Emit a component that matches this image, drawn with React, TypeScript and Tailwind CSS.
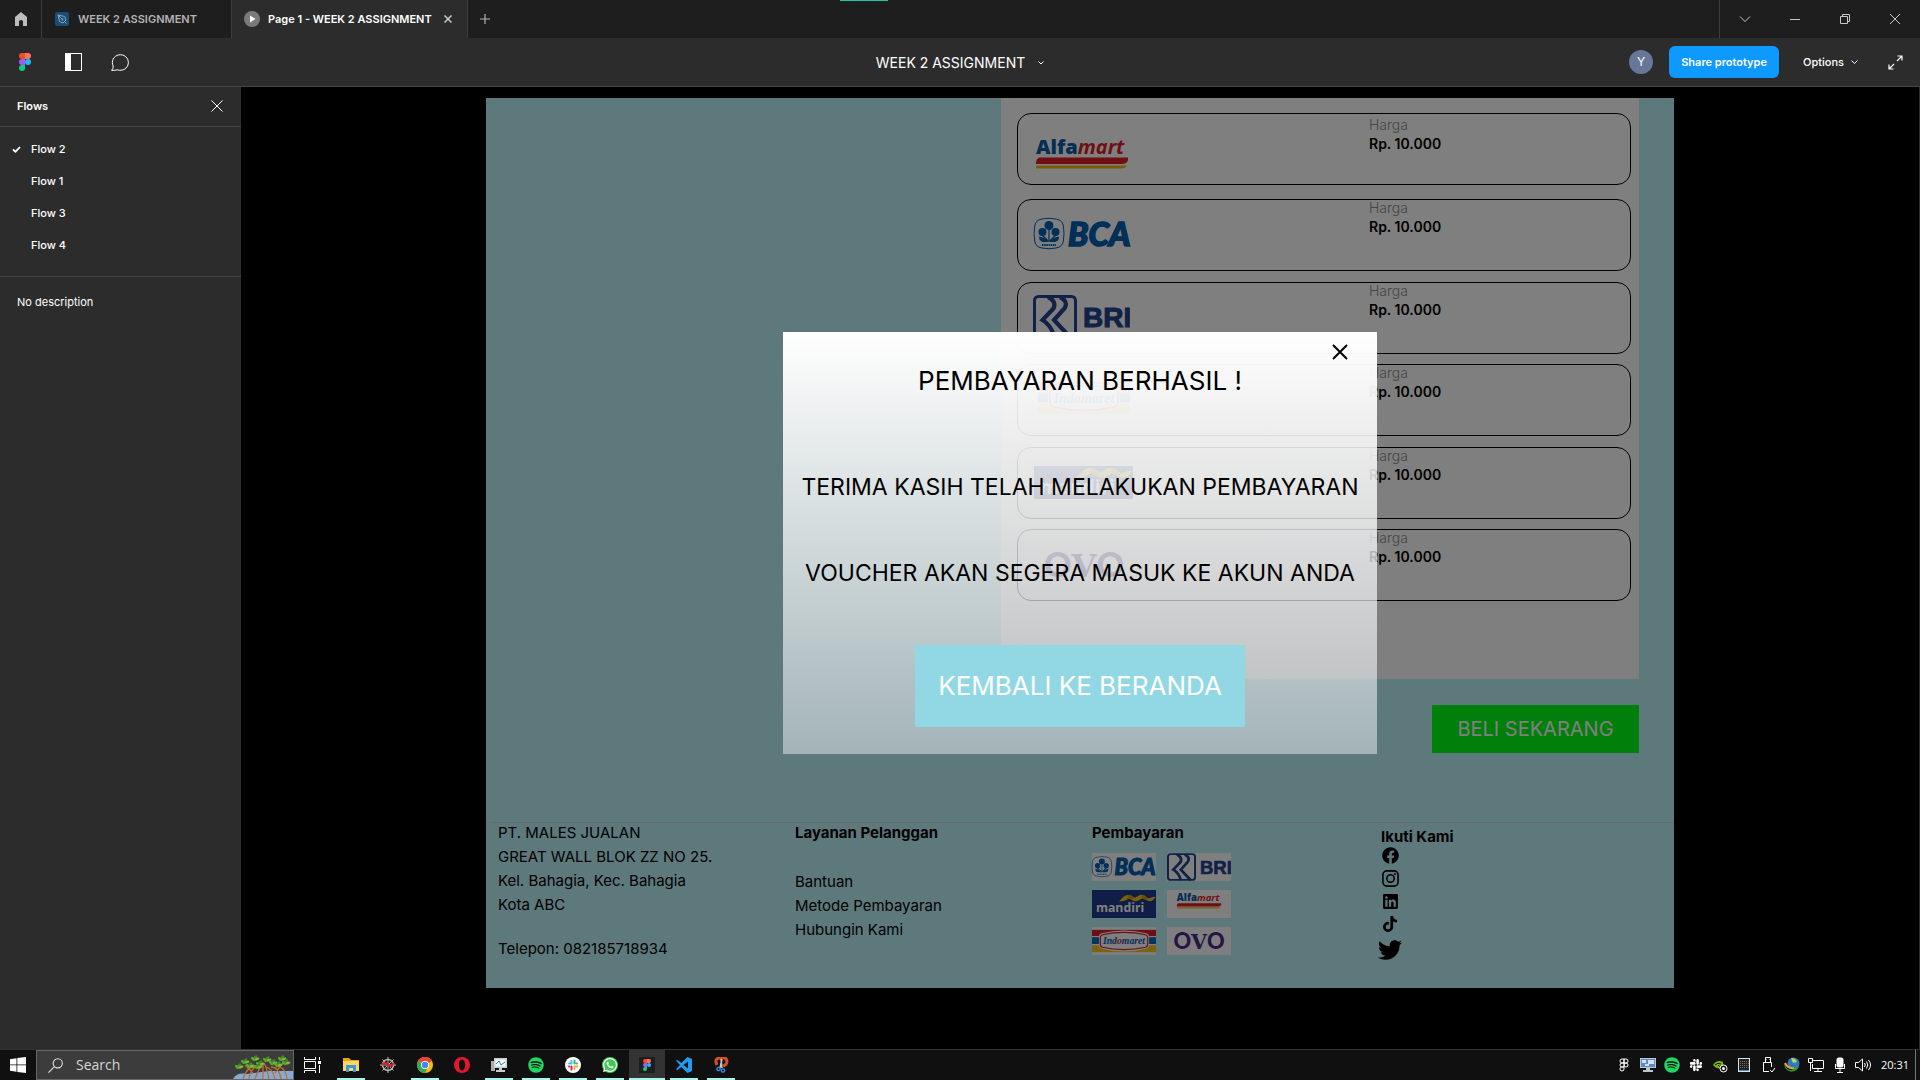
import type { ReactNode } from "react";
import { FaFacebook, FaLinkedin, FaSlack, FaSpotify, FaTiktok, FaTwitter, FaWhatsapp } from "react-icons/fa";

/* ---------- Brand logos ---------- */

type LogoProps = { className?: string; viewBox?: string };

function AlfamartLogo({ className = "", viewBox = "0 0 92 31" }: LogoProps) {
  return (
    <svg className={`overflow-visible ${className}`} viewBox={viewBox} role="img" aria-label="Alfamart">
      <text x="0" y="15.5" fontFamily="Open Sans, sans-serif" fontSize="20" fontWeight="800" fill="#0a5cab">
        Alfa<tspan fontStyle="italic" fontWeight="700" fill="#e01f26">mart</tspan>
      </text>
      <path d="M4 19.500H92V22Q91 26 86 26H0V24Q1 19.500 4 19.500Z" fill="#e01f26" />
      <path d="M0 27.500H91Q89 30.500 86 30.500H0Z" fill="#f2b90f" />
    </svg>
  );
}

function BcaLogo({ className = "", viewBox = "0 0 97 31" }: LogoProps) {
  return (
    <svg className={`overflow-visible ${className}`} viewBox={viewBox} role="img" aria-label="BCA">
      <g fill="#0060af">
        <path d="M8 1Q15-.5 22 1Q29 2 29.500 9Q30.500 15.500 29.500 22Q29 29 22 30Q15 31.500 8 30Q1 29 .6 22Q-.4 15.500 .6 9Q1 2 8 1Z" fill="none" stroke="#0060af" strokeWidth="1" />
        <circle cx="15" cy="7.500" r="4.500" />
        <circle cx="8.500" cy="14" r="4" />
        <circle cx="21.500" cy="14" r="4" />
        <path d="M14.400 10H15.600V24H14.400ZM8 16L14.200 22V24L7 17ZM22 16L15.800 22V24L23 17Z" />
        <path d="M5 18.500C9 19 13 21 14.200 24H9Q5 23 5 18.500ZM25 18.500C21 19 17 21 15.800 24H21Q25 23 25 18.500Z" />
        <path d="M8 27H22" stroke="#0060af" strokeWidth="1.800" strokeDasharray="1.500 .7" />
        <text x="34" y="27.500" fontFamily="Lato, sans-serif" fontSize="33" fontWeight="900" fontStyle="italic" stroke="#0060af" strokeWidth="1.600">BCA</text>
      </g>
    </svg>
  );
}

function BriLogo({ className = "", viewBox = "0 0 97 42" }: LogoProps) {
  return (
    <svg className={className} viewBox={viewBox} role="img" aria-label="BRI">
      <g fill="none" stroke="#25428f" strokeWidth="4.200">
        <rect x="1.500" y="1.500" width="41" height="39" rx="4" strokeWidth="3" />
        <path d="M15 2C23 6 23 12 18 16L9.500 25Q18 30 21 41" />
        <path d="M27 2C35 6 34 12 29 16L21 25L36 41" />
      </g>
      <text x="50" y="32" fontFamily="Liberation Sans, sans-serif" fontSize="28" fontWeight="700" fill="#25428f" stroke="#25428f" strokeWidth="1">BRI</text>
    </svg>
  );
}

function IndomaretLogo({ className = "", viewBox = "0 0 92 32" }: LogoProps) {
  return (
    <svg className={className} viewBox={viewBox} role="img" aria-label="Indomaret">
      <rect y="0" width="92" height="9" fill="#d8202c" />
      <rect y="9" width="92" height="1.500" fill="#fff" />
      <rect y="10.500" width="92" height="10" fill="#0c6cb8" />
      <rect y="20.500" width="92" height="1.500" fill="#fff" />
      <rect y="22" width="92" height="10" fill="#f7c51e" />
      <path d="M14 5Q46-3 78 5Q82 6 82 10V22Q82 26 78 27Q46 35 14 27Q10 26 10 22V10Q10 6 14 5Z" fill="#fff" />
      <path d="M15 7Q46 0 77 7Q80 8 80 11V21Q80 24 77 25Q46 32 15 25Q12 24 12 21V11Q12 8 15 7Z" fill="#fff" stroke="#d8202c" strokeWidth="1.800" />
      <text x="46" y="20.500" textAnchor="middle" fontFamily="Liberation Serif, serif" fontStyle="italic" fontWeight="700" fontSize="14" fill="#0c5ca8">
        Ind<tspan fill="#d8202c">o</tspan>maret
      </text>
    </svg>
  );
}

function MandiriLogo({ className = "", viewBox = "0 0 99 33" }: LogoProps) {
  return (
    <svg className={className} viewBox={viewBox} role="img" aria-label="Mandiri">
      <rect y="-6" width="99" height="44" fill="#213a8f" />
      <path d="M42 12C48 6 50 2 56 2C62 2 63 6 67 6C71 5 73 1 78 2C84 3 84 7 88 7C92 7 93 4 98 5C96 10 91 13 86 11C81 9 80 6 76 8C72 11 69 13 64 11C60 9 58 6 54 9C51 11 47 12 42 12Z" fill="#f5c518" />
      <path d="M56 2C62 2 63 6 67 6L62 10C59 8 57 7 54 9ZM78 2C84 3 84 7 88 7L84 10C81 8 79 7 76 8Z" fill="#d9940f" />
      <text x="6" y="28" fontFamily="Open Sans, sans-serif" fontSize="19" fontWeight="700" fill="#fff">mandiri</text>
    </svg>
  );
}

function OvoLogo({ className = "", viewBox = "0 0 80 27" }: LogoProps) {
  return (
    <svg className={`overflow-visible ${className}`} viewBox={viewBox} role="img" aria-label="OVO">
      <text x="40" y="25.500" textAnchor="middle" fontFamily="Lato, sans-serif" fontSize="34" fontWeight="900" fill="#4c2a86">
        O<tspan fontFamily="DejaVu Serif, serif" fontWeight="700" fontSize="32">V</tspan>O
      </text>
    </svg>
  );
}

function FigmaMark({ className = "" }: { className?: string }) {
  return (
    <svg className={className} viewBox="0 0 12 18" aria-hidden="true">
      <path d="M3 0H6V6H3A3 3 0 0 1 3 0Z" fill="#f24e1e" />
      <path d="M6 0H9A3 3 0 0 1 9 6H6Z" fill="#ff7262" />
      <path d="M3 6H6V12H3A3 3 0 0 1 3 6Z" fill="#a259ff" />
      <circle cx="9" cy="9" r="3" fill="#1abcfe" />
      <path d="M3 12H6V15A3 3 0 1 1 3 12Z" fill="#0acf83" />
    </svg>
  );
}

/* ---------- Window chrome ---------- */

function WindowButton({ label, children }: { label: string; children: ReactNode }) {
  return (
    <button aria-label={label} className="flex h-full w-[50px] items-center justify-center">
      <svg width="12" height="12" viewBox="0 0 12 12" fill="none" stroke="#c8c8c8" strokeWidth="1">
        {children}
      </svg>
    </button>
  );
}

function TabBar() {
  return (
    <header className="relative flex h-[38px] bg-[#1e1e1e] text-[11px] font-semibold">
      <div className="absolute top-0 left-[840px] h-px w-12 bg-[#1fc8a4]" />
      <button aria-label="Home" className="flex w-[42px] items-center justify-center border-r border-[#3d3d3d]">
        <svg width="14" height="14" viewBox="0 0 14 14" fill="#bdbdbd">
          <path d="M7 0L13 5V14H9V9.500Q9 8 7 8Q5 8 5 9.500V14H1V5Z" />
        </svg>
      </button>
      <button className="flex w-[190px] items-center gap-[9px] border-r border-[#3d3d3d] pl-[13px] text-[#b3b3b3]">
        <svg width="14" height="14" viewBox="0 0 14 14" fill="none">
          <rect width="14" height="14" rx="2" fill="#174e78" />
          <path d="M3 3L9.500 4.500L11 8L8 11L4.500 9.500ZM3 3L7 7M10 10L11.500 11.500" stroke="#8fa3b3" />
          <circle cx="7.500" cy="7.500" r="1" fill="#8fa3b3" />
        </svg>
        WEEK 2 ASSIGNMENT
      </button>
      <div className="flex w-[236px] items-center border-r border-[#3d3d3d] bg-[#2c2c2c] pr-[15px] pl-3 text-white">
        <button className="flex items-center gap-2">
          <svg width="16" height="16" viewBox="0 0 16 16">
            <circle cx="8" cy="8" r="8" fill="#7a7a7a" />
            <path d="M6 4.500L11.500 8L6 11.500Z" fill="#fff" />
          </svg>
          Page 1 - WEEK 2 ASSIGNMENT
        </button>
        <button aria-label="Close tab" className="ml-auto">
          <svg width="8" height="8" viewBox="0 0 8 8" stroke="#ccc" strokeWidth="1.500">
            <path d="M.5 .5L7.500 7.500M7.500 .5L.5 7.500" />
          </svg>
        </button>
      </div>
      <button aria-label="New tab" className="pl-3">
        <svg width="10" height="10" viewBox="0 0 10 10" stroke="#b3b3b3">
          <path d="M5 0V10M0 5H10" strokeWidth="1.200" />
        </svg>
      </button>
      <div className="ml-auto flex border-l border-[#3d3d3d]">
        <WindowButton label="Tabs">
          <path d="M1 3.500L6 8.500L11 3.500" />
        </WindowButton>
        <WindowButton label="Minimize">
          <path d="M1 6.500H11" />
        </WindowButton>
        <WindowButton label="Restore">
          <path d="M1.500 3.500H8.500V10.500H1.500ZM3.500 3.500V1.500H10.500V8.500H8.500" />
        </WindowButton>
        <WindowButton label="Close">
          <path d="M1 1L11 11M11 1L1 11" />
        </WindowButton>
      </div>
    </header>
  );
}

function Toolbar() {
  return (
    <div className="grid h-[49px] grid-cols-[1fr_auto_1fr] items-center border-b border-[#444] bg-[#2c2c2c] text-white">
      <div className="flex items-center pl-[19px]">
        <button aria-label="Figma menu">
          <FigmaMark className="h-[18px] w-3" />
        </button>
        <button aria-label="Toggle sidebar" className="ml-[34px]">
          <svg width="17" height="18" viewBox="0 0 17 18">
            <rect x=".5" y=".5" width="16" height="17" fill="none" stroke="#fff" />
            <rect width="6" height="18" fill="#fff" />
          </svg>
        </button>
        <button aria-label="Comments" className="ml-[29px]">
          <svg width="18" height="17" viewBox="0 0 18 17" fill="none" stroke="#fff">
            <path d="M.6 16.400Q2.400 14.500 2.200 12A8 7.800 0 1 1 6.500 15.800Q4 16.500 .6 16.400Z" />
          </svg>
        </button>
      </div>
      <button className="flex items-center gap-[13px] pt-0.5 text-sm leading-5">
        WEEK 2 ASSIGNMENT
        <svg width="6" height="4" viewBox="0 0 6 4" fill="none" stroke="#fff">
          <path d="M.5 .5L3 3L5.500 .5" />
        </svg>
      </button>
      <div className="flex items-center justify-end pr-[17px] text-[11px]">
        <span className="flex size-6 items-center justify-center rounded-full bg-[#667799] text-xs">Y</span>
        <button className="ml-4 h-8 w-[110px] rounded-md bg-[#0d99ff] font-semibold">Share prototype</button>
        <button className="ml-6 flex items-center gap-[7px] font-medium">
          Options
          <svg width="7" height="4" viewBox="0 0 7 4" fill="none" stroke="#fff">
            <path d="M.5 .5L3.500 3.500L6.500 .5" />
          </svg>
        </button>
        <button aria-label="Full screen" className="ml-[30px]">
          <svg width="15" height="15" viewBox="0 0 15 15" fill="none" stroke="#fff" strokeWidth="1.200">
            <path d="M9.500 1H14V5.500M14 1L9 6M1 9.500V14H5.500M1 14L6 9" />
          </svg>
        </button>
      </div>
    </div>
  );
}

const flows = [
  { name: "Flow 2", active: true },
  { name: "Flow 1", active: false },
  { name: "Flow 3", active: false },
  { name: "Flow 4", active: false },
];

function Sidebar() {
  return (
    <aside className="w-[241px] shrink-0 bg-[#2c2c2c] text-[11px] leading-4 text-white">
      <div className="flex h-10 items-center justify-between border-b border-[#444] pr-[18px] pb-0.5 pl-[17px]">
        <h2 className="font-semibold">Flows</h2>
        <button aria-label="Close sidebar">
          <svg width="12" height="12" viewBox="0 0 12 12" stroke="#fff">
            <path d="M.5 .5L11.500 11.500M11.500 .5L.5 11.500" />
          </svg>
        </button>
      </div>
      <ul className="border-b border-[#444] pt-1.5 pb-[15px]">
        {flows.map((flow) => (
          <li key={flow.name}>
            <button className="flex h-8 w-full items-center pl-3 font-medium">
              <span className="w-[19px]">
                {flow.active && (
                  <svg width="9" height="7" viewBox="0 0 9 7" fill="none" stroke="#fff" strokeWidth="1.800">
                    <path d="M1 3.500L3.500 5.700L8 1" />
                  </svg>
                )}
              </span>
              {flow.name}
            </button>
          </li>
        ))}
      </ul>
      <p className="pt-[17px] pl-[17px]">No description</p>
    </aside>
  );
}

/* ---------- Prototype page ---------- */

const payments = [
  { name: "Alfamart", card: "mb-1 pt-[3px]", logo: <AlfamartLogo className="mt-[21px] ml-[18px] h-[31px] w-[92px]" /> },
  { name: "BCA", card: "mb-px", logo: <BcaLogo className="mt-[18px] ml-4 h-[31px] w-[97px]" /> },
  { name: "BRI", card: "", logo: <BriLogo className="mt-3 ml-[15px] h-[42px] w-[97px]" /> },
  { name: "Indomaret", card: "mb-px", logo: <IndomaretLogo className="mt-[17px] ml-5 h-8 w-[92px]" /> },
  { name: "Mandiri", card: "", logo: <MandiriLogo className="mt-[18px] ml-4 h-[33px] w-[99px]" /> },
  { name: "OVO", card: "", logo: <OvoLogo className="mt-[21px] ml-[26px] h-[27px] w-20" /> },
];

const brandTiles = [
  { name: "BCA", logo: <BcaLogo viewBox="0 -5 97 42" className="h-7 w-16" /> },
  { name: "BRI", logo: <BriLogo className="h-7 w-16" /> },
  { name: "Mandiri", logo: <MandiriLogo viewBox="0 -5 99 42" className="h-7 w-16" /> },
  { name: "Alfamart", logo: <AlfamartLogo viewBox="-20 -8 132 58" className="h-7 w-16" /> },
  { name: "Indomaret", logo: <IndomaretLogo viewBox="0 -4 92 40" className="h-7 w-16" /> },
  { name: "OVO", logo: <OvoLogo viewBox="-10 -8 100 43" className="h-7 w-16" /> },
];

function PaymentMethods() {
  return (
    <section className="mr-[35px] ml-auto flex w-[638px] max-w-full flex-col gap-2.5 bg-white pt-[15px] pr-2 pb-[78px] pl-4">
      {payments.map((p) => (
        <div key={p.name} className={`flex h-[72px] justify-between rounded-[14px] border border-black ${p.card}`}>
          {p.logo}
          <dl className="w-[261px] text-sm">
            <dt className="leading-4 font-light text-[#8c8c8c]">Harga</dt>
            <dd className="leading-[22px] font-semibold">Rp. 10.000</dd>
          </dl>
        </div>
      ))}
    </section>
  );
}

function PageFooter() {
  return (
    <footer className="mt-[69px]">
      <hr className="ml-1 border-[#d8d0d0]" />
      <div className="grid grid-cols-[297px_297px_289px_1fr] pb-[26px] pl-3 text-[15px] leading-6">
        <address className="not-italic">
          <p className="mb-0.5 leading-5">PT. MALES JUALAN</p>
          <p>GREAT WALL BLOK ZZ NO 25.</p>
          <p>Kel. Bahagia, Kec. Bahagia</p>
          <p>Kota ABC</p>
          <p className="mt-5">Telepon: 082185718934</p>
        </address>
        <nav>
          <h3 className="mb-[27px] leading-5 font-bold">Layanan Pelanggan</h3>
          <ul>
            <li><a href="#bantuan">Bantuan</a></li>
            <li><a href="#metode">Metode Pembayaran</a></li>
            <li><a href="#hubungi">Hubungin Kami</a></li>
          </ul>
        </nav>
        <div>
          <h3 className="mb-2.5 leading-5 font-bold">Pembayaran</h3>
          <ul className="grid w-[139px] grid-cols-2 gap-x-[11px] gap-y-[9px]">
            {brandTiles.map((b) => (
              <li key={b.name} className="h-7 bg-white">{b.logo}</li>
            ))}
          </ul>
        </div>
        <div className="pt-1">
          <h3 className="leading-5 font-bold">Ikuti Kami</h3>
          <ul className="flex w-[18px] flex-col items-center gap-1.5">
            <li><a href="#facebook" aria-label="Facebook"><FaFacebook size={17} /></a></li>
            <li><a href="#instagram" aria-label="Instagram"><InstagramGlyph /></a></li>
            <li><a href="#linkedin" aria-label="LinkedIn"><FaLinkedin size={17} /></a></li>
            <li><a href="#tiktok" aria-label="TikTok"><FaTiktok size={16} /></a></li>
            <li><a href="#twitter" aria-label="Twitter"><FaTwitter size={24} /></a></li>
          </ul>
        </div>
      </div>
    </footer>
  );
}

function InstagramGlyph() {
  return (
    <svg width="17" height="17" viewBox="0 0 17 17" fill="none" stroke="#000" strokeWidth="1.600">
      <rect x=".9" y=".9" width="15.200" height="15.200" rx="4" />
      <circle cx="8.500" cy="8.500" r="3.700" />
      <circle cx="13" cy="4" r="1" fill="#000" stroke="none" />
    </svg>
  );
}

function SuccessDialog() {
  return (
    <div className="absolute inset-0 flex items-center justify-center bg-black/50">
      <div
        role="dialog"
        aria-label="Pembayaran berhasil"
        className="relative flex w-[594px] flex-col items-center bg-linear-to-b from-white to-[#f8fbff]/45 pt-[33px] pb-[27px] text-[23px] leading-8"
      >
        <button aria-label="Tutup" className="absolute top-3 right-[29px]">
          <svg width="16" height="16" viewBox="0 0 16 16" stroke="#000" strokeWidth="2">
            <path d="M1 1L15 15M15 1L1 15" />
          </svg>
        </button>
        <h1 className="text-[26px]">PEMBAYARAN BERHASIL !</h1>
        <p className="mt-[74px]">TERIMA KASIH TELAH MELAKUKAN PEMBAYARAN</p>
        <p className="mt-[54px]">VOUCHER AKAN SEGERA MASUK KE AKUN ANDA</p>
        <button className="mt-14 h-[82px] w-[330px] bg-[#92d8e4] text-[26px] text-white">KEMBALI KE BERANDA</button>
      </div>
    </div>
  );
}

function Prototype() {
  return (
    <main className="flex-1 border-r border-[#2c2c2c] bg-black pt-[11px] pb-[61px]">
      <div className="relative mx-auto w-full max-w-[1188px] bg-[#baf2f9] text-black">
        <PaymentMethods />
        <button className="mt-[26px] mr-[35px] ml-auto block h-12 w-[207px] bg-[#00ff15] text-xl text-white">
          BELI SEKARANG
        </button>
        <PageFooter />
        <SuccessDialog />
      </div>
    </main>
  );
}

/* ---------- Taskbar ---------- */

function Mangrove() {
  const leaves = [
    [6, 13], [12, 8], [17, 12], [22, 5], [27, 10], [34, 6], [40, 9], [45, 11], [49, 5], [53, 9], [25, 13],
  ];
  return (
    <svg width="60" height="26" viewBox="0 0 60 26" aria-hidden="true">
      <path d="M0 26Q4 19 14 21L36 18H60V26Z" fill="#86a9d6" />
      <g fill="none" stroke="#c2702a" strokeWidth="1.300">
        <path d="M10 26Q14 12 24 14M16 26Q18 14 27 12M22 26Q26 15 30 10M30 26V10M36 26Q34 15 31 10M42 26Q40 16 33 14M48 26Q46 14 38 14M54 26Q54 16 44 13M12 12L20 20M50 10L42 20" />
      </g>
      {leaves.map(([x, y], i) => (
        <g key={i}>
          <ellipse cx={x} cy={y} rx="3.200" ry="1.600" fill="#3f8a24" transform={`rotate(-55 ${x} ${y})`} />
          <ellipse cx={x + 2} cy={y + 1} rx="2.600" ry="1.300" fill="#7cbc3c" transform={`rotate(-20 ${x + 2} ${y + 1})`} />
          <ellipse cx={x - 2} cy={y + 1} rx="2.600" ry="1.300" fill="#5ea52e" transform={`rotate(45 ${x - 2} ${y + 1})`} />
        </g>
      ))}
    </svg>
  );
}

const taskIcons = [
  {
    name: "File Explorer", open: true, active: false,
    icon: (
      <svg width="16" height="16" viewBox="0 0 16 16">
        <path d="M0 1H6L8 3H16V14H0Z" fill="#e8a317" />
        <path d="M0 4H16V14H0Z" fill="#ffd75e" />
        <path d="M3 15V8H13V15H10V11H6V15Z" fill="#3a96dd" />
      </svg>
    ),
  },
  {
    name: "Web tool", open: false, active: false,
    icon: (
      <svg width="16" height="16" viewBox="0 0 16 16" fill="none" stroke="#b5b5b5">
        <circle cx="8" cy="8" r="5.500" strokeWidth="1.500" />
        <path d="M8 0V16M0 8H16M2.500 2.500L13.500 13.500M13.500 2.500L2.500 13.500" />
        <path d="M2 8Q5 4 8 8Q11 10 14 6" stroke="#d8232a" strokeWidth="2.500" />
      </svg>
    ),
  },
  {
    name: "Chrome", open: true, active: false,
    icon: (
      <svg width="16" height="16" viewBox="0 0 16 16">
        <circle cx="8" cy="8" r="8" fill="#fbbc05" />
        <path d="M8 8L1.100 4A8 8 0 0 1 14.900 4Z" fill="#ea4335" />
        <path d="M8 8L1.100 4A8 8 0 0 0 8 16L11 10Z" fill="#34a853" />
        <circle cx="8" cy="8" r="4" fill="#fff" />
        <circle cx="8" cy="8" r="3.200" fill="#4285f4" />
      </svg>
    ),
  },
  {
    name: "Opera", open: false, active: false,
    icon: (
      <svg width="16" height="16" viewBox="0 0 16 16">
        <circle cx="8" cy="8" r="8" fill="#e3182d" />
        <ellipse cx="8" cy="8" rx="3.200" ry="5.500" fill="#101010" />
      </svg>
    ),
  },
  {
    name: "Performance Monitor", open: true, active: false,
    icon: (
      <svg width="16" height="16" viewBox="0 0 16 16">
        <path d="M0 4H4V14H0Z" fill="#a9a9a9" />
        <path d="M3 1H16V11H3ZM8 11H11V13H14V15H5V13H8Z" fill="#c9ccd0" />
        <path d="M4.500 2.500H14.500V9.500H4.500Z" fill="#f4fbff" />
        <path d="M5 7L8 4L10 8L14 5" fill="none" stroke="#2b7fc2" />
      </svg>
    ),
  },
  { name: "Spotify", open: true, active: false, icon: <FaSpotify size={16} color="#1ed760" /> },
  {
    name: "Slack", open: true, active: false,
    icon: (
      <svg width="16" height="16" viewBox="0 0 16 16">
        <circle cx="8" cy="8" r="8" fill="#fff" />
        <g fill="none" strokeWidth="2" strokeLinecap="round">
          <path d="M6.500 4V6.500M4 6.500H6.500" stroke="#36c5f0" />
          <path d="M9.500 3.500V6.500M12 6.500H11.500" stroke="#2eb67d" />
          <path d="M9.500 9.500H12.500M9.500 12V11.500" stroke="#ecb22e" />
          <path d="M6.500 9.500V12.500M4 9.500H4.200" stroke="#e01e5a" />
        </g>
      </svg>
    ),
  },
  {
    name: "WhatsApp", open: true, active: false,
    icon: (
      <span className="flex size-4 items-center justify-center rounded-full bg-[#3ec952] text-white">
        <FaWhatsapp size={16} />
      </span>
    ),
  },
  { name: "Figma", open: true, active: true, icon: <span className="flex size-4 items-center justify-center bg-[#1e1e1e]"><FigmaMark className="h-3 w-2" /></span> },
  {
    name: "Visual Studio Code", open: true, active: false,
    icon: (
      <svg width="16" height="16" viewBox="0 0 16 16">
        <path d="M11.500 0L16 2V14L11.500 16L5.300 10.100L1.500 13L0 12.200L4 8L0 3.800L1.500 3L5.300 5.900Z" fill="#1f9cf0" />
        <path d="M12 4.500V11.500L7.500 8Z" fill="#101010" />
      </svg>
    ),
  },
  {
    name: "Snip", open: true, active: false,
    icon: (
      <svg width="16" height="16" viewBox="0 0 16 16" fill="none">
        <path d="M4 8Q1 2 6 1Q13-1 14 4Q14 8 10 9" stroke="#d9501e" strokeWidth="3" />
        <path d="M8 2L9 11M9 2L7 11" stroke="#c9c9c9" strokeWidth="1.500" />
        <circle cx="5.500" cy="12" r="1.700" stroke="#2f8fe0" strokeWidth="1.300" />
        <circle cx="10" cy="13.500" r="1.700" stroke="#2f8fe0" strokeWidth="1.300" />
      </svg>
    ),
  },
];

const trayIcons: { name: string; icon: ReactNode }[] = [
  {
    name: "Figma agent",
    icon: (
      <svg width="16" height="16" viewBox="0 0 16 16" fill="none" stroke="#fff">
        <path d="M8 2H6A2 2 0 0 0 6 6H8ZM8 2H10A2 2 0 0 1 10 6H8ZM8 6H6A2 2 0 0 0 6 10H8ZM8 10H6A2 2 0 1 0 8 12Z" />
        <circle cx="10" cy="8" r="2" />
      </svg>
    ),
  },
  {
    name: "Display",
    icon: (
      <svg width="16" height="16" viewBox="0 0 16 16">
        <path d="M0 1H16V11H0ZM6 11H10V13H13V15H3V13H6Z" fill="#b8c6d6" />
        <path d="M1 2H15V10H1Z" fill="#5f8cc0" />
        <path d="M2 3H6V6H2ZM8 3H14V7H8ZM5 7H9V9H5Z" fill="#cfe2f5" />
      </svg>
    ),
  },
  { name: "Spotify", icon: <FaSpotify size={16} color="#1ed760" /> },
  { name: "Slack", icon: <FaSlack size={14} color="#fff" /> },
  {
    name: "Nvidia",
    icon: (
      <svg width="16" height="16" viewBox="0 0 16 16" fill="none">
        <path d="M1 8Q5 2 11 5V11Q5 13 1 8Z" fill="#76b900" />
        <path d="M3 8Q6 5 9 7M6 8Q7 10 9 9" stroke="#101010" />
        <circle cx="11.500" cy="11.500" r="3.500" fill="#101010" stroke="#fff" />
        <circle cx="11.500" cy="11.500" r="1.500" fill="#fff" />
      </svg>
    ),
  },
  {
    name: "Activity",
    icon: (
      <svg width="16" height="16" viewBox="0 0 16 16">
        <rect x="2.500" y="1.500" width="11" height="13" fill="#222" stroke="#ddd" />
        <path d="M4 4.500H13M4 6.500H13M4 8.500H13M4 10.500H13" stroke="#666" strokeDasharray="1 1" />
        <path d="M3 13.500H13" stroke="#3a96dd" />
      </svg>
    ),
  },
  {
    name: "Eject USB",
    icon: (
      <svg width="16" height="16" viewBox="0 0 16 16" fill="none" stroke="#fff">
        <path d="M5.500 5V.5H10.500V5M3.500 5.500H11.500V10M3.500 5.500V14.500H9M6.500 2.500H7M9 2.500H9.500M10 13L12 15L15 11" />
      </svg>
    ),
  },
  {
    name: "Download manager",
    icon: (
      <svg width="16" height="16" viewBox="0 0 16 16">
        <circle cx="9.500" cy="6.500" r="6" fill="#2d77c9" />
        <path d="M7 1Q12 1 13 5L9 6Z" fill="#b9d84a" />
        <path d="M1 6Q1 14 9 13L12 9L15 10Q11 16 5 14Q-1 11 1 6Z" fill="#2f9e38" />
        <path d="M1 6Q4 12 10 11" fill="none" stroke="#f2a51f" strokeWidth="2" />
      </svg>
    ),
  },
  {
    name: "Network",
    icon: (
      <svg width="16" height="16" viewBox="0 0 16 16" fill="none" stroke="#fff">
        <path d="M4 3.500H15.500V11.500H4.500V7M10 11.500V14M6 14.500H14M.5 1.500H4.500V5.500H.5ZM2.500 6V14" />
      </svg>
    ),
  },
  {
    name: "Microphone",
    icon: (
      <svg width="16" height="16" viewBox="0 0 16 16" fill="none" stroke="#fff">
        <rect x="5" y="1" width="6" height="9" rx="1.500" fill="#fff" />
        <path d="M3.500 7V11.500H12.500V7M8 12V15M5 15.500H11" />
      </svg>
    ),
  },
  {
    name: "Volume",
    icon: (
      <svg width="17" height="16" viewBox="0 0 17 16" fill="none" stroke="#fff">
        <path d="M.5 5.500H3.500L7.500 2V14L3.500 10.500H.5ZM9.500 6Q11 8 9.500 10M11.500 4.500Q14 8 11.500 11.500M13.500 3Q17.500 8 13.500 13" />
      </svg>
    ),
  },
];

function Taskbar() {
  return (
    <footer className="flex h-[31px] border-t border-[#333] bg-[#101010] font-['Open_Sans',sans-serif] text-white">
      <button aria-label="Start" className="flex w-9 items-center justify-center">
        <svg width="16" height="16" viewBox="0 0 16 16" fill="#fff">
          <path d="M0 2.200L6.500 1.200V7.500H0ZM7.300 1.100L16 0V7.500H7.300ZM0 8.300H6.500V14.700L0 13.800ZM7.300 8.300H16V16L7.300 14.900Z" />
        </svg>
      </button>
      <label className="relative flex w-[258px] items-center overflow-hidden border border-[#666] bg-[#3c3c3c] pl-[11px]">
        <svg width="17" height="17" viewBox="0 0 17 17" fill="none" stroke="#e6e6e6" strokeWidth="1.200">
          <circle cx="11" cy="6" r="5.200" />
          <path d="M7 10L.5 16.500" />
        </svg>
        <input
          aria-label="Search"
          placeholder="Search"
          className="ml-[13px] w-full bg-transparent text-sm text-[#d6d6d6] outline-none placeholder:text-[#d6d6d6]"
        />
        <span className="absolute right-0 bottom-0">
          <Mangrove />
        </span>
      </label>
      <button aria-label="Task view" className="flex w-9 items-center justify-center">
        <svg width="17" height="16" viewBox="0 0 17 16" fill="none" stroke="#fff">
          <path d="M.5 0V2.500H11.500V0M.5 16V13.500H11.500V16M.5 4.500H11.500V11.500H.5ZM15.500 0V3M15.500 8V16" />
          <path d="M14 4H17V7H14Z" fill="#fff" stroke="none" />
        </svg>
      </button>
      <div className="ml-[3px] flex gap-px">
        {taskIcons.map((t) => (
          <button
            key={t.name}
            aria-label={t.name}
            className={`relative flex w-9 items-center justify-center ${t.active ? "bg-[#333]" : ""}`}
          >
            {t.icon}
            {t.open && (
              <span className={`absolute bottom-0 h-0.5 bg-[#a8f5ea] ${t.active ? "inset-x-0" : "inset-x-1"}`} />
            )}
          </button>
        ))}
      </div>
      <div className="ml-auto flex">
        {trayIcons.map((t) => (
          <button key={t.name} aria-label={t.name} className="flex w-6 items-center justify-center">
            {t.icon}
          </button>
        ))}
        <time className="mr-1.5 ml-[5px] self-center text-[11px] leading-4">20:31</time>
        <span className="mr-1 border-l border-[#777]" />
      </div>
    </footer>
  );
}

export default function App() {
  return (
    <div className="flex min-h-screen flex-col bg-black font-['Inter',sans-serif]">
      <TabBar />
      <Toolbar />
      <div className="flex flex-1">
        <Sidebar />
        <Prototype />
      </div>
      <Taskbar />
    </div>
  );
}
